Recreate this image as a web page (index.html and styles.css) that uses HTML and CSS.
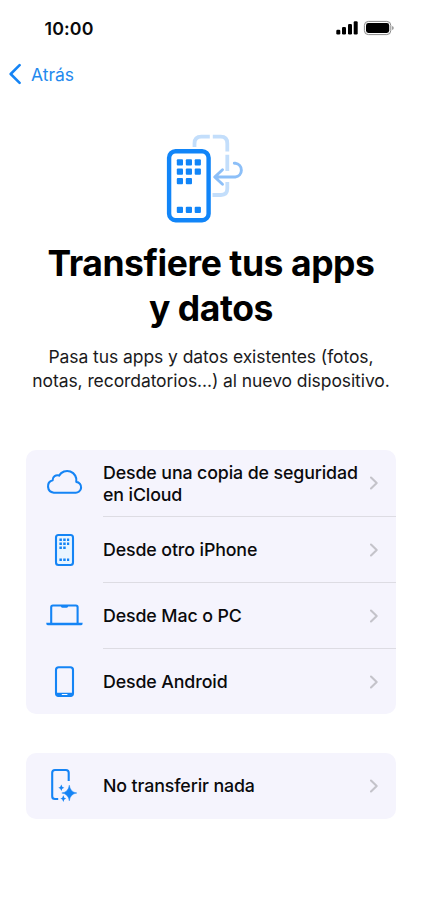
FILE: index.html
```html
<!DOCTYPE html>
<html lang="es">
<head>
<meta charset="utf-8">
<title>Transfiere tus apps y datos</title>
<link rel="stylesheet" href="styles.css">
</head>
<body>
<header class="status">
  <span class="time">10:00</span>
  <svg class="status-icons" width="60" height="16" viewBox="334 20 60 16">
    <g fill="#000">
      <rect x="336.3" y="29.7" width="4" height="4.8" rx="1.2"/>
      <rect x="342" y="27" width="4" height="7.5" rx="1.2"/>
      <rect x="348" y="24" width="4" height="10.5" rx="1.2"/>
      <rect x="353.7" y="21.2" width="4" height="13.3" rx="1.2"/>
      <rect x="366" y="23" width="23.2" height="10" rx="2.4"/>
    </g>
    <rect x="364.4" y="21.4" width="26.4" height="13.2" rx="4" fill="none" stroke="#8a8a8a"/>
    <path d="M392.2 26v4q1.500-.7 1.500-2t-1.500-2z" fill="#8a8a8a"/>
  </svg>
</header>
<nav class="nav">
  <a class="back">
    <svg width="14" height="22" viewBox="0 0 14 22"><path d="M12.600 2.200 3.700 11l8.900 8.800" fill="none" stroke="#1584f5" stroke-width="2.600" stroke-linecap="round" stroke-linejoin="round"/></svg>
    <span>Atrás</span>
  </a>
</nav>
<main>
  <svg class="hero" width="100" height="105" viewBox="155 125 100 105" fill="none">
    <g stroke="#c3defb" stroke-width="3.800">
      <path d="M194.500 147v-3.500q0-6.800 6.800-6.800h8.500M212.800 136.700h8q6.500 0 6.500 6.800v8M227.300 154.700V171M227.300 182v6.500q0 6.500-6.500 6.500h-8.300"/>
    </g>
    <path d="M234.300 163.300h1a6.900 6.900 0 0 1 0 13.700H215.500M222.500 169.800l-7.800 7.200 7.800 7.300" stroke="#8cbff8" stroke-width="2.900" stroke-linecap="round" stroke-linejoin="round"/>
    <rect x="169.100" y="151.200" width="39.500" height="69" rx="6.500" fill="#fff" stroke="#1185f8" stroke-width="4.400"/>
    <g fill="#1185f8">
      <rect x="176.800" y="159.200" width="6.200" height="6.200" rx="1"/><rect x="185.800" y="159.200" width="6.200" height="6.200" rx="1"/><rect x="194.700" y="159.200" width="6.200" height="6.200" rx="1"/>
      <rect x="176.800" y="168.600" width="6.200" height="6.200" rx="1"/><rect x="185.800" y="168.600" width="6.200" height="6.200" rx="1"/><rect x="194.700" y="168.600" width="6.200" height="6.200" rx="1"/>
      <rect x="176.800" y="178" width="6.200" height="6.200" rx="1"/><rect x="185.800" y="178" width="6.200" height="6.200" rx="1"/>
      <rect x="176.800" y="206.700" width="6.200" height="6.200" rx="1"/><rect x="185.800" y="206.700" width="6.200" height="6.200" rx="1"/><rect x="194.700" y="206.700" width="6.200" height="6.200" rx="1"/>
    </g>
  </svg>
  <h1>Transfiere tus apps<br>y datos</h1>
  <p class="intro">Pasa tus apps y datos existentes (fotos,<br>notas, recordatorios...) al nuevo dispositivo.</p>

  <ul class="card">
    <li class="row">
      <svg class="icon" width="40" height="40" viewBox="44.700 463 40 40"><path d="M54.500 492.700H75.800a5.300 5.300 0 0 0 1.200-10.800A9.300 9.300 0 0 0 59.800 475.600a4.800 4.800 0 0 0-6.500 4.600A6.400 6.400 0 0 0 54.500 492.700z"/></svg>
      <div class="cell"><span class="label">Desde una copia de seguridad<br>en iCloud</span><svg class="chev" width="10" height="16" viewBox="0 0 10 16"><path d="M2 2.500 7.700 8 2 13.500"/></svg></div>
    </li>
    <li class="row">
      <svg class="icon" width="40" height="40" viewBox="44 529 40 40">
        <rect x="56" y="535" width="17" height="30" rx="2.500" fill="#e9f5ff"/>
        <path d="M59.400 539.800h9.800M59.400 543.800h9.800M59.400 547.800h6.500M59.400 559.800h9.800" stroke-width="2.400" stroke-dasharray="2.500 1.300" stroke-linecap="butt"/>
      </svg>
      <div class="cell"><span class="label">Desde otro iPhone</span><svg class="chev" width="10" height="16" viewBox="0 0 10 16"><path d="M2 2.500 7.700 8 2 13.500"/></svg></div>
    </li>
    <li class="row">
      <svg class="icon" width="40" height="40" viewBox="44 595 40 40">
        <path d="M51.200 623v-15.800q0-1.700 1.700-1.700h23q1.700 0 1.700 1.700V623"/>
        <path d="M60.800 605.500h7.400v.6q0 1.600-1.500 1.600h-4.400q-1.500 0-1.500-1.600z" fill="#1584f5" stroke="none"/>
        <path d="M46.200 622.700h36.500q0 2.500-1.600 2.500H47.800q-1.600 0-1.600-2.500z" fill="#1584f5" stroke="none"/>
      </svg>
      <div class="cell"><span class="label">Desde Mac o PC</span><svg class="chev" width="10" height="16" viewBox="0 0 10 16"><path d="M2 2.500 7.700 8 2 13.500"/></svg></div>
    </li>
    <li class="row">
      <svg class="icon" width="40" height="40" viewBox="44 661 40 40">
        <rect x="56" y="667.300" width="17" height="28.700" rx="2.700"/>
        <path d="M56 692.700h17v1.800q0 2-2 2H58q-2 0-2-2z" fill="#1584f5" stroke="none"/>
        <path d="M61.800 694.500h5.600" stroke="#fff" stroke-width="1.100"/>
      </svg>
      <div class="cell"><span class="label">Desde Android</span><svg class="chev" width="10" height="16" viewBox="0 0 10 16"><path d="M2 2.500 7.700 8 2 13.500"/></svg></div>
    </li>
  </ul>

  <ul class="card skip">
    <li class="row">
      <svg class="icon" width="40" height="40" viewBox="44 766 40 40">
        <path d="M68.700 781v-8.200q0-2.800-2.800-2.800H55q-2.800 0-2.800 2.800v23.400q0 2.800 2.800 2.800h3.200" stroke-linecap="butt"/>
        <g fill="#1584f5" stroke="none">
          <path d="M69.300 785.200q.9 6.900 7.500 7.800-6.600.9-7.500 7.800-.9-6.900-7.500-7.800 6.600-.9 7.500-7.800z" stroke="#1584f5" stroke-width=".5"/>
          <path d="M61.300 784.600q.5 2.700 3 3.200-2.500.5-3 3.200-.5-2.700-3-3.200 2.500-.5 3-3.200z"/>
          <path d="M63.300 795.200q.5 2.900 3 3.400-2.500.5-3 3.400-.5-2.900-3-3.400 2.500-.5 3-3.400z"/>
        </g>
      </svg>
      <div class="cell"><span class="label">No transferir nada</span><svg class="chev" width="10" height="16" viewBox="0 0 10 16"><path d="M2 2.500 7.700 8 2 13.500"/></svg></div>
    </li>
  </ul>
</main>
</body>
</html>
```
FILE: styles.css
```css
* { box-sizing: border-box; }
body {
  margin: 0;
  min-height: 913px;
  background: #fff;
  color: #0a0a0c;
  font-family: Inter, "Liberation Sans", sans-serif;
}
svg { display: block; flex: none; }
.status {
  display: flex;
  justify-content: space-between;
  align-items: center;
  height: 56px;
  padding: 0 28px 0 44.500px;
}
.time { font-size: 17.8px; font-weight: 600; letter-spacing: .15px; }
.nav { height: 36px; padding-left: 7px; display: flex; align-items: center; }
.back {
  display: flex;
  align-items: center;
  gap: 10px;
  color: #2489ee;
  font-size: 17.5px;
}
.hero { margin: 33px 0 0 155.300px; }
h1 {
  margin: 12px 0 0;
  text-align: center;
  font-size: 35.5px;
  line-height: 44.500px;
  letter-spacing: -.43px;
  font-weight: 700;
  color: #000;
  white-space: nowrap;
}
.intro {
  margin: 14px 0 0;
  text-align: center;
  font-size: 17.5px;
  line-height: 24.300px;
  letter-spacing: -.08px;
  color: #1a1a1c;
  white-space: nowrap;
}
.card {
  list-style: none;
  margin: 56px 26px 0;
  padding: 0;
  border-radius: 10px;
  background: #f5f4fd;
  overflow: hidden;
}
.card.skip { margin-top: 39px; }
.row { display: flex; align-items: center; height: 66px; padding-left: 18px; }
.icon {
  fill: none;
  stroke: #1584f5;
  stroke-width: 2.1;
  stroke-linejoin: round;
}
.cell {
  flex: 1;
  height: 100%;
  margin-left: 19px;
  padding: 1px 17px 0 0;
  display: flex;
  align-items: center;
  justify-content: space-between;
}
.row + .row .cell { border-top: 1px solid #dddce3; }
.label {
  padding-top: 1px;
  font-size: 17.8px;
  line-height: 22px;
  letter-spacing: -.12px;
  font-weight: 500;
  white-space: nowrap;
}
.skip .cell, .skip .label { padding-top: 0; }
.chev { fill: none; stroke: #c4c3ca; stroke-width: 2.1; stroke-linecap: round; stroke-linejoin: round; }
```
